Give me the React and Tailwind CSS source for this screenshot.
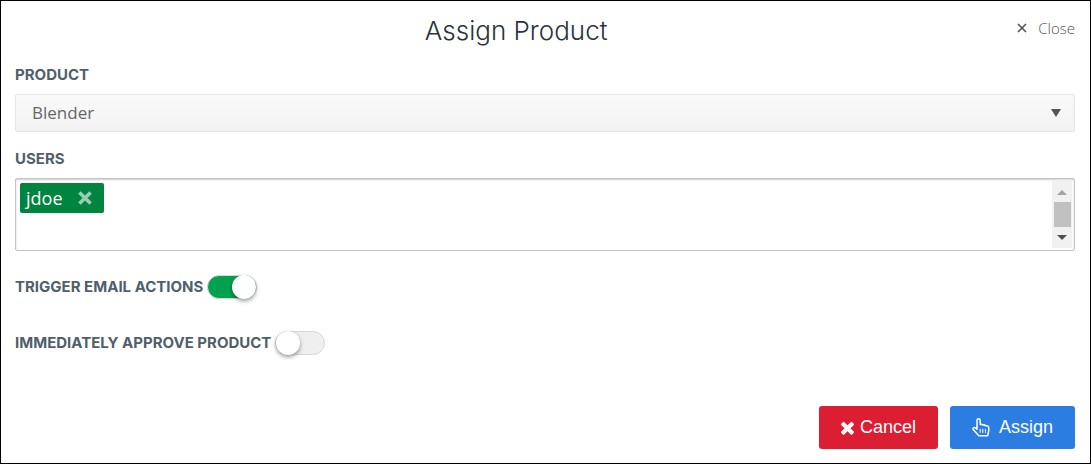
import { useState } from 'react';

function TimesIcon({ className }) {
  return (
    <svg viewBox="302 302 1188 1252" fill="currentColor" aria-hidden="true" className={className}>
      <path d="M1490 1322q0 40-28 68l-136 136q-28 28-68 28t-68-28l-294-294-294 294q-28 28-68 28t-68-28l-136-136q-28-28-28-68t28-68l294-294-294-294q-28-28-28-68t28-68l136-136q28-28 68-28t68 28l294 294 294-294q28-28 68-28t68 28l136 136q28 28 28 68t-28 68l-294 294 294 294q28 28 28 68z" />
    </svg>
  );
}

function CrossIcon({ className }) {
  return (
    <svg viewBox="0 0 12 12" fill="none" stroke="currentColor" aria-hidden="true" className={className}>
      <path d="M1.2 1.2L10.8 10.8M10.8 1.2L1.2 10.8" />
    </svg>
  );
}

function HandIcon({ className }) {
  return (
    <svg
      viewBox="0 0 18 19"
      fill="none"
      stroke="currentColor"
      strokeWidth="1.5"
      strokeLinecap="round"
      strokeLinejoin="round"
      aria-hidden="true"
      className={className}
    >
      <path d="M5 11.2V2.4A1.6 1.6 0 0 1 8.2 2.4V6.6Q9.6 5.8 10.8 7.1Q12.4 6.4 13.5 7.8Q16.8 7.2 16.8 10.2V11.8Q16.8 13.4 16.2 15L15.7 17.8H6.8L1.2 11.6Q.5 10.5 1.5 9.8Q2.5 9.1 3.5 9.9Z" />
      <path d="M8.2 11.2V14.5M10.8 11.2V14.5M13.4 11.2V14.5" strokeWidth="1" />
    </svg>
  );
}

function Toggle({ id, label, checked, onChange }) {
  return (
    <div className="flex items-center gap-1">
      <label htmlFor={id} className="text-[15px] leading-6 font-bold text-[#4f5f6b] uppercase">
        {label}
      </label>
      <input
        id={id}
        type="checkbox"
        role="switch"
        checked={checked}
        onChange={(e) => onChange(e.target.checked)}
        className="flex h-6 w-[50px] shrink-0 appearance-none items-center rounded-full border border-[#d8d8d8] bg-[#efefef] before:size-6 before:rounded-full before:bg-white before:shadow-[0_2px_4px_rgba(0,0,0,0.4)] checked:justify-end checked:bg-[#00a14f]"
      />
    </div>
  );
}

export default function AssignProduct() {
  const [product, setProduct] = useState('Blender');
  const [users, setUsers] = useState(['jdoe']);
  const [query, setQuery] = useState('');
  const [triggerEmail, setTriggerEmail] = useState(true);
  const [approve, setApprove] = useState(false);

  return (
    <form
      onSubmit={(e) => e.preventDefault()}
      className="border border-black bg-white pt-3 pr-[15px] pb-[14px] pl-[14px] font-['Inter',sans-serif]"
    >
      <div className="flex items-start">
        <h1 className="flex-1 text-center text-[26px] leading-9 font-light text-[#2b3338]">
          Assign Product
        </h1>
        <button
          type="button"
          className="flex items-center gap-[11px] font-['Open_Sans',sans-serif] text-[15px] leading-[30px] font-light text-[#555]"
        >
          <CrossIcon className="size-[10px] stroke-2" />
          Close
        </button>
      </div>

      <div className="mt-4">
        <label htmlFor="product" className="block text-[15px] leading-5 font-bold text-[#4f5f6b] uppercase">
          Product
        </label>
        <div className="mt-[9px] flex items-center rounded-xs border border-[#e5e5e5] bg-linear-to-b from-[#f9f9f9] to-[#f3f3f3]">
          <select
            id="product"
            value={product}
            onChange={(e) => setProduct(e.target.value)}
            className="h-9 flex-1 appearance-none pl-4 font-['Open_Sans',sans-serif] text-[17px] text-[#666]"
          >
            <option>Blender</option>
          </select>
          <svg viewBox="0 0 10 8" fill="#555" aria-hidden="true" className="pointer-events-none mr-[13px] h-2 w-[10px]">
            <path d="M0 0H10L5 8Z" />
          </svg>
        </div>
      </div>

      <div className="mt-[17px]">
        <label htmlFor="users" className="block text-[15px] leading-5 font-bold text-[#4f5f6b] uppercase">
          Users
        </label>
        <div className="mt-[9px] flex rounded-xs border border-[#c4c4c4] shadow-[inset_0_1px_2px_rgba(0,0,0,0.2)]">
          <div className="flex-1 p-1">
            <div className="flex flex-wrap">
              {users.map((user) => (
                <span
                  key={user}
                  className="flex h-[30px] items-center gap-[15px] rounded-xs bg-[#008540] pr-3 pl-[6px] font-['Open_Sans',sans-serif] text-[18px] text-white"
                >
                  {user}
                  <button
                    type="button"
                    aria-label={`Remove ${user}`}
                    onClick={() => setUsers(users.filter((u) => u !== user))}
                    className="text-[#99ceb3]"
                  >
                    <CrossIcon className="size-[14px] stroke-3" />
                  </button>
                </span>
              ))}
            </div>
            <input
              id="users"
              type="text"
              value={query}
              onChange={(e) => setQuery(e.target.value)}
              className="block h-[33px] w-full text-[18px] outline-none"
            />
          </div>
          <div aria-hidden="true" className="my-[2px] mr-[2px] flex w-5 flex-col items-center bg-[#f1f1f1] pt-[9px] pb-2">
            <svg viewBox="0 0 10 5" fill="#a3a3a3" className="h-[5px] w-[10px]">
              <path d="M0 5H10L5 0Z" />
            </svg>
            <div className="mt-[7px] h-[25px] w-[17px] bg-[#c1c1c1]" />
            <svg viewBox="0 0 10 5" fill="#505050" className="mt-auto h-[5px] w-[10px]">
              <path d="M0 0H10L5 5Z" />
            </svg>
          </div>
        </div>
      </div>

      <div className="mt-6 flex flex-col gap-8">
        <Toggle id="trigger-email" label="Trigger email actions" checked={triggerEmail} onChange={setTriggerEmail} />
        <Toggle id="approve-product" label="Immediately approve product" checked={approve} onChange={setApprove} />
      </div>

      <div className="mt-[51px] flex justify-end gap-3 font-['Liberation_Sans',Arial,sans-serif] text-[18px] text-white">
        <button type="button" className="flex h-[43px] items-center gap-[6px] rounded-[3px] bg-[#dc1e32] px-[22px]">
          <TimesIcon className="h-[14px] w-[13px]" />
          Cancel
        </button>
        <button type="submit" className="flex h-[43px] items-center gap-[9px] rounded-[3px] bg-[#2b7de1] px-[22px]">
          <HandIcon className="h-[19px] w-[18px]" />
          Assign
        </button>
      </div>
    </form>
  );
}
